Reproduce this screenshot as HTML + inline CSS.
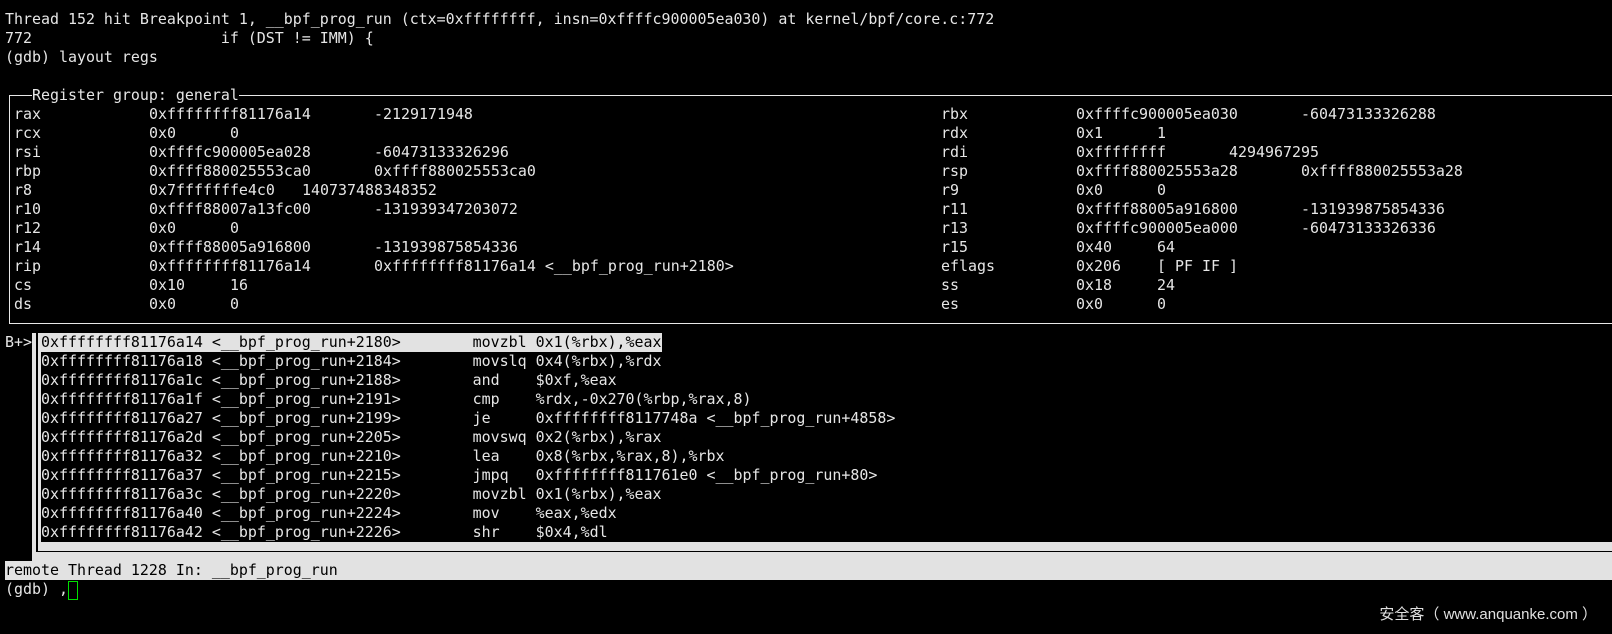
<!DOCTYPE html>
<html><head><meta charset="utf-8"><style>
html,body{margin:0;padding:0;background:#000;width:1612px;height:634px;overflow:hidden;position:relative}
.t{position:absolute;font-family:"DejaVu Sans Mono","Liberation Mono",monospace;font-size:14.95px;line-height:19px;height:19px;color:#e6e6e6;white-space:pre;margin:0}
.b{position:absolute;background:#e8e8e8}
.k{position:absolute;background:#000}
.g{position:absolute;background:#e2e2e2}
</style></head><body>
<div class="t" style="left:5px;top:10px">Thread 152 hit Breakpoint 1, __bpf_prog_run (ctx=0xffffffff, insn=0xffffc900005ea030) at kernel/bpf/core.c:772</div>
<div class="t" style="left:5px;top:29px">772                     if (DST != IMM) {</div>
<div class="t" style="left:5px;top:48px">(gdb) layout regs</div>

<div class="b" style="left:9px;top:95px;width:23px;height:1px"></div>
<div class="t" style="left:32px;top:86px">Register group: general</div>
<div class="b" style="left:239px;top:95px;width:1373px;height:1px"></div>
<div class="b" style="left:9px;top:95px;width:1px;height:229px"></div>
<div class="b" style="left:9px;top:323px;width:1603px;height:1px"></div>

<div class="t" style="left:14px;top:105px">rax</div><div class="t" style="left:149px;top:105px">0xffffffff81176a14</div><div class="t" style="left:374px;top:105px">-2129171948</div>
<div class="t" style="left:14px;top:124px">rcx</div><div class="t" style="left:149px;top:124px">0x0</div><div class="t" style="left:230px;top:124px">0</div>
<div class="t" style="left:14px;top:143px">rsi</div><div class="t" style="left:149px;top:143px">0xffffc900005ea028</div><div class="t" style="left:374px;top:143px">-60473133326296</div>
<div class="t" style="left:14px;top:162px">rbp</div><div class="t" style="left:149px;top:162px">0xffff880025553ca0</div><div class="t" style="left:374px;top:162px">0xffff880025553ca0</div>
<div class="t" style="left:14px;top:181px">r8</div><div class="t" style="left:149px;top:181px">0x7fffffffe4c0</div><div class="t" style="left:302px;top:181px">140737488348352</div>
<div class="t" style="left:14px;top:200px">r10</div><div class="t" style="left:149px;top:200px">0xffff88007a13fc00</div><div class="t" style="left:374px;top:200px">-131939347203072</div>
<div class="t" style="left:14px;top:219px">r12</div><div class="t" style="left:149px;top:219px">0x0</div><div class="t" style="left:230px;top:219px">0</div>
<div class="t" style="left:14px;top:238px">r14</div><div class="t" style="left:149px;top:238px">0xffff88005a916800</div><div class="t" style="left:374px;top:238px">-131939875854336</div>
<div class="t" style="left:14px;top:257px">rip</div><div class="t" style="left:149px;top:257px">0xffffffff81176a14</div><div class="t" style="left:374px;top:257px">0xffffffff81176a14 &lt;__bpf_prog_run+2180&gt;</div>
<div class="t" style="left:14px;top:276px">cs</div><div class="t" style="left:149px;top:276px">0x10</div><div class="t" style="left:230px;top:276px">16</div>
<div class="t" style="left:14px;top:295px">ds</div><div class="t" style="left:149px;top:295px">0x0</div><div class="t" style="left:230px;top:295px">0</div>

<div class="t" style="left:941px;top:105px">rbx</div><div class="t" style="left:1076px;top:105px">0xffffc900005ea030</div><div class="t" style="left:1301px;top:105px">-60473133326288</div>
<div class="t" style="left:941px;top:124px">rdx</div><div class="t" style="left:1076px;top:124px">0x1</div><div class="t" style="left:1157px;top:124px">1</div>
<div class="t" style="left:941px;top:143px">rdi</div><div class="t" style="left:1076px;top:143px">0xffffffff</div><div class="t" style="left:1229px;top:143px">4294967295</div>
<div class="t" style="left:941px;top:162px">rsp</div><div class="t" style="left:1076px;top:162px">0xffff880025553a28</div><div class="t" style="left:1301px;top:162px">0xffff880025553a28</div>
<div class="t" style="left:941px;top:181px">r9</div><div class="t" style="left:1076px;top:181px">0x0</div><div class="t" style="left:1157px;top:181px">0</div>
<div class="t" style="left:941px;top:200px">r11</div><div class="t" style="left:1076px;top:200px">0xffff88005a916800</div><div class="t" style="left:1301px;top:200px">-131939875854336</div>
<div class="t" style="left:941px;top:219px">r13</div><div class="t" style="left:1076px;top:219px">0xffffc900005ea000</div><div class="t" style="left:1301px;top:219px">-60473133326336</div>
<div class="t" style="left:941px;top:238px">r15</div><div class="t" style="left:1076px;top:238px">0x40</div><div class="t" style="left:1157px;top:238px">64</div>
<div class="t" style="left:941px;top:257px">eflags</div><div class="t" style="left:1076px;top:257px">0x206</div><div class="t" style="left:1157px;top:257px">[ PF IF ]</div>
<div class="t" style="left:941px;top:276px">ss</div><div class="t" style="left:1076px;top:276px">0x18</div><div class="t" style="left:1157px;top:276px">24</div>
<div class="t" style="left:941px;top:295px">es</div><div class="t" style="left:1076px;top:295px">0x0</div><div class="t" style="left:1157px;top:295px">0</div>

<div class="g" style="left:32px;top:333px;width:9px;height:228px"></div>
<div class="g" style="left:32px;top:542px;width:1580px;height:19px"></div>
<div class="k" style="left:36px;top:333px;width:2px;height:219px"></div>
<div class="k" style="left:36px;top:551px;width:1576px;height:1px"></div>
<div class="t" style="left:5px;top:333px">B+&gt;</div>
<div class="g" style="left:41px;top:333px;width:621px;height:19px"></div>
<div class="t" style="left:41px;top:333px;color:#000">0xffffffff81176a14 &lt;__bpf_prog_run+2180&gt;        movzbl 0x1(%rbx),%eax</div>
<div class="t" style="left:41px;top:352px">0xffffffff81176a18 &lt;__bpf_prog_run+2184&gt;        movslq 0x4(%rbx),%rdx</div>
<div class="t" style="left:41px;top:371px">0xffffffff81176a1c &lt;__bpf_prog_run+2188&gt;        and    $0xf,%eax</div>
<div class="t" style="left:41px;top:390px">0xffffffff81176a1f &lt;__bpf_prog_run+2191&gt;        cmp    %rdx,-0x270(%rbp,%rax,8)</div>
<div class="t" style="left:41px;top:409px">0xffffffff81176a27 &lt;__bpf_prog_run+2199&gt;        je     0xffffffff8117748a &lt;__bpf_prog_run+4858&gt;</div>
<div class="t" style="left:41px;top:428px">0xffffffff81176a2d &lt;__bpf_prog_run+2205&gt;        movswq 0x2(%rbx),%rax</div>
<div class="t" style="left:41px;top:447px">0xffffffff81176a32 &lt;__bpf_prog_run+2210&gt;        lea    0x8(%rbx,%rax,8),%rbx</div>
<div class="t" style="left:41px;top:466px">0xffffffff81176a37 &lt;__bpf_prog_run+2215&gt;        jmpq   0xffffffff811761e0 &lt;__bpf_prog_run+80&gt;</div>
<div class="t" style="left:41px;top:485px">0xffffffff81176a3c &lt;__bpf_prog_run+2220&gt;        movzbl 0x1(%rbx),%eax</div>
<div class="t" style="left:41px;top:504px">0xffffffff81176a40 &lt;__bpf_prog_run+2224&gt;        mov    %eax,%edx</div>
<div class="t" style="left:41px;top:523px">0xffffffff81176a42 &lt;__bpf_prog_run+2226&gt;        shr    $0x4,%dl</div>

<div class="g" style="left:5px;top:561px;width:1607px;height:19px"></div>
<div class="t" style="left:5px;top:561px;color:#000">remote Thread 1228 In: __bpf_prog_run</div>
<div class="t" style="left:5px;top:580px">(gdb) ,</div>
<div style="position:absolute;left:68px;top:581px;width:8px;height:17px;border:1px solid #00e000"></div>

<div style="position:absolute;right:15px;top:605px;font-family:'Liberation Sans','Noto Sans CJK SC',sans-serif;font-size:15px;line-height:20px;color:#e0e0e0;white-space:pre">安全客（ www.anquanke.com ）</div>
</body></html>
